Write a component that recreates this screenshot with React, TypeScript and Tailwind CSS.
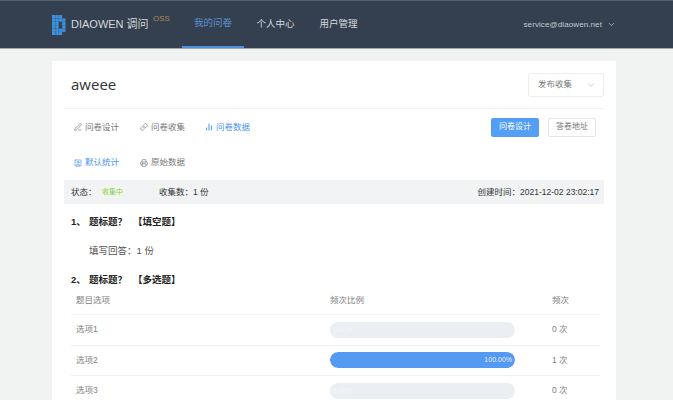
import { BarChart2, ChevronDown, Link, PenLine, Printer, SquareUser } from 'lucide-react'

const font = { fontFamily: '"Liberation Sans", "Noto Sans CJK SC", sans-serif' }
const latin = { fontFamily: '"Open Sans", "Noto Sans CJK SC", sans-serif' }

const rows = [
  { name: '选项1', pct: 0, label: '0.00%', count: '0 次' },
  { name: '选项2', pct: 100, label: '100.00%', count: '1 次' },
  { name: '选项3', pct: 0, label: '0.00%', count: '0 次' },
]

// pixel-block "D" mark
function Logo() {
  const cells = [
    [0, 0], [3.4, 0], [6.8, 0],
    [0, 3.4], [3.4, 3.4], [6.8, 3.4], [10.2, 3.4],
    [0, 6.8], [3.4, 6.8], [10.2, 6.8],
    [0, 10.2], [3.4, 10.2], [10.2, 10.2],
    [0, 13.6], [3.4, 13.6], [6.8, 13.6], [10.2, 13.6],
    [0, 17], [3.4, 17], [6.8, 17],
  ]
  return (
    <svg width="14" height="20" viewBox="0 0 14 20" className="shrink-0">
      {cells.map(([x, y]) => (
        <rect key={`${x}-${y}`} x={x} y={y} width="3.3" height="3.3" fill="#3c8fdb" />
      ))}
    </svg>
  )
}

export default function App() {
  return (
    <div className="h-[400px] overflow-hidden bg-[#f1f2f2]" style={font}>
      <header className="flex h-[49px] items-stretch border-t border-b border-t-[#56626f] border-b-[#a3a9b0] bg-[#34404f] pl-[52px] pr-[57px]">
        <div className="flex items-center">
          <Logo />
          <span className="ml-[5px] w-[76px] whitespace-nowrap text-[11px] text-[#d3d8dd]">DIAOWEN 调问</span>
          <span className="mb-[12px] ml-[6px] w-[15px] text-[8px] text-[#a88a55]">OSS</span>
        </div>
        <nav className="ml-[14px] flex items-stretch text-[9.500px] text-[#d5d9dd]">
          <a className="flex w-[62px] items-center justify-center border-b-2 border-[#4d8fdc] text-[#5a8fd0]">我的问卷</a>
          <a className="flex w-[63px] items-center justify-center">个人中心</a>
          <a className="flex w-[63px] items-center justify-center">用户管理</a>
        </nav>
        <div className="ml-auto flex items-center gap-[5px] text-[8px] tracking-[0.1px] text-[#c3c9cf]">
          service@diaowen.net
          <ChevronDown size={9} />
        </div>
      </header>

      <main className="mx-[52px] mt-[12px] w-[564px] bg-white px-3">
        <div className="flex h-[48px] items-center justify-between border-b border-[#f3f3f3] pl-[7px]">
          <h1 className="text-[15px] text-[#333]" style={latin}>aweee</h1>
          <div className="flex h-[24px] w-[76px] items-center justify-between rounded-[3px] border border-[#eceded] pl-[9px] pr-[7px] text-[8.500px] text-[#777]">
            发布收集
            <ChevronDown size={10} className="text-[#c4c7cb]" />
          </div>
        </div>

        <div className="flex h-[36px] items-center pl-[10px] text-[8.500px] text-[#777]">
          <span className="flex items-center gap-[3px]"><PenLine size={8} />问卷设计</span>
          <span className="ml-[21px] flex items-center gap-[3px]"><Link size={8} />问卷收集</span>
          <span className="ml-[20px] flex items-center gap-[3px] text-[#4d94ee]"><BarChart2 size={8} strokeWidth={3} />问卷数据</span>
          <button className="ml-auto h-[19px] w-[48px] rounded-[2px] bg-[#549ff5] text-[8px] text-white">问卷设计</button>
          <button className="ml-[9px] mr-[8px] h-[19px] w-[48px] rounded-[2px] border border-[#e6e6e6] text-[8px] text-[#777]">答卷地址</button>
        </div>

        <div className="flex h-[35px] items-center pl-[10px] text-[8.500px] text-[#777]">
          <span className="flex items-center gap-[3px] text-[#4d94ee]"><SquareUser size={8} />默认统计</span>
          <span className="ml-[21px] flex items-center gap-[3px]"><Printer size={8} />原始数据</span>
        </div>

        <div className="flex h-[24px] items-center bg-[#f1f3f4] pl-[7px] pr-[5px] text-[8.500px] text-[#333]">
          <span className="w-[30px]">状态：</span>
          <span className="bg-[#f0f9e8] px-[1px] text-[7px] text-[#8ccb5a]">收集中</span>
          <span className="ml-[35px]">收集数：1 份</span>
          <span className="ml-auto">创建时间：2021-12-02 23:02:17</span>
        </div>

        <h2 className="mt-[12px] flex pl-[7px] text-[9.500px] font-bold leading-[12px] text-[#222]">
          <span className="w-[18px]">1、</span>
          <span className="w-[44px]">题标题？</span>
          <span>【填空题】</span>
        </h2>
        <p className="mt-[17px] pl-[25px] text-[9.500px] leading-[12px] text-[#555]">填写回答：1 份</p>
        <h2 className="mt-[17px] flex pl-[7px] text-[9.500px] font-bold leading-[12px] text-[#222]">
          <span className="w-[18px]">2、</span>
          <span className="w-[44px]">题标题？</span>
          <span>【多选题】</span>
        </h2>

        <div className="ml-[7px] mr-[4px] mt-[1px] text-[8.500px] text-[#808080]">
          <div className="grid h-[28px] grid-cols-[254px_222px_1fr] items-center border-b border-[#f3f3f3] pl-[5px]">
            <span>题目选项</span>
            <span>频次比例</span>
            <span>频次</span>
          </div>
          {rows.map((row) => (
            <div key={row.name} className="grid h-[30.500px] grid-cols-[254px_222px_1fr] items-center border-b border-[#eff0f1] pl-[5px]">
              <span>{row.name}</span>
              <div className="h-[16px] w-[185px] overflow-hidden rounded-full bg-[#ebeef2]">
                {row.pct > 0 ? (
                  <div className="flex h-full items-center justify-end rounded-full bg-[#549af3] pr-[3px] text-[7px] text-[#e4effd]" style={{ width: `${row.pct}%` }}>
                    {row.label}
                  </div>
                ) : (
                  <div className="pl-[3px] text-[7px] leading-[16px] text-[#f7f8fa]">{row.label}</div>
                )}
              </div>
              <span>{row.count}</span>
            </div>
          ))}
        </div>
      </main>
    </div>
  )
}
